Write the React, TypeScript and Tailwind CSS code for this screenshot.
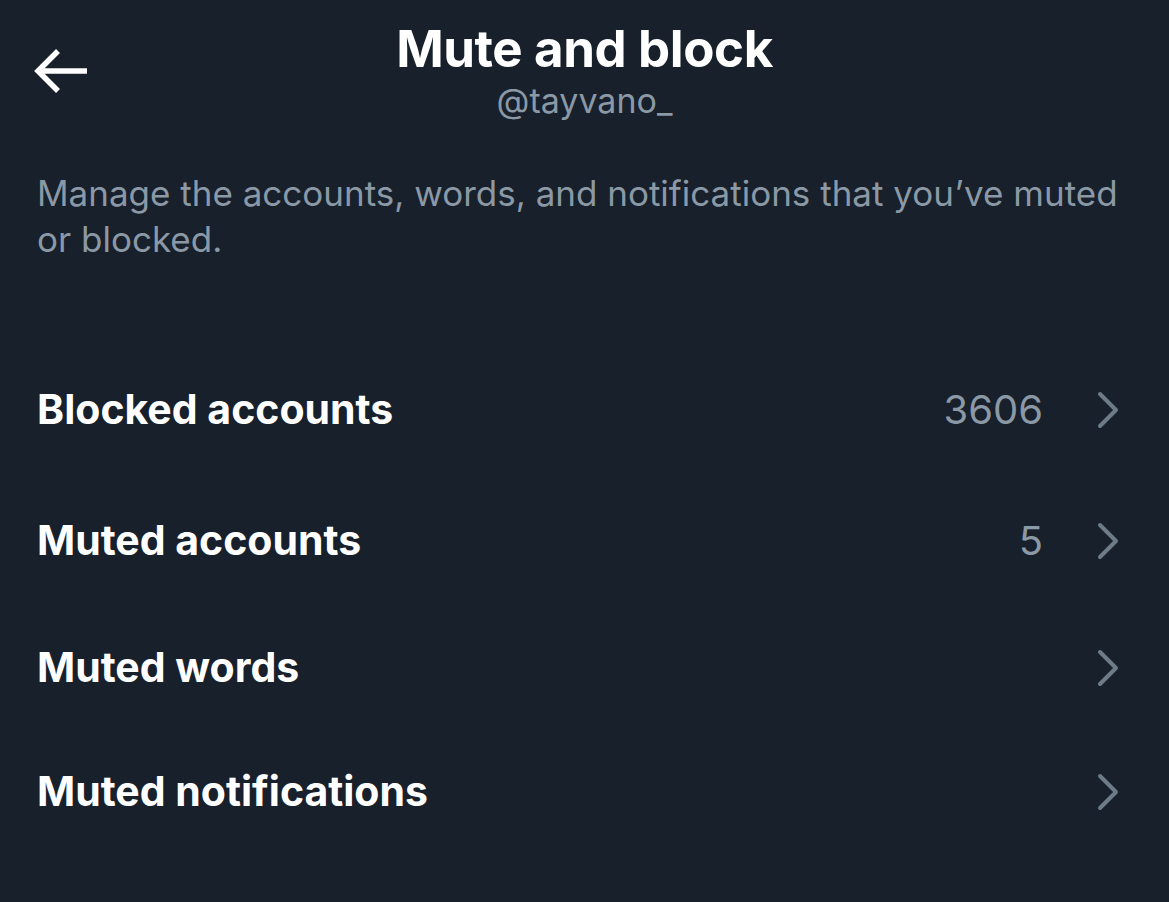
const rows = [
  { label: "Blocked accounts", count: "3606", h: "h-[132px]" },
  { label: "Muted accounts", count: "5", h: "h-[129px]" },
  { label: "Muted words", count: "", h: "h-[125px]" },
  { label: "Muted notifications", count: "", h: "h-[123px]" },
]

function Chevron() {
  return (
    <svg width="26" height="40" viewBox="0 0 26 40" fill="none" className="text-[#6e7b88]">
      <path d="M5 4 L21 20 L5 36" stroke="currentColor" strokeWidth="4" strokeLinecap="round" strokeLinejoin="round" />
    </svg>
  )
}

function BackArrow() {
  return (
    <svg width="58" height="48" viewBox="0 0 58 48" fill="none" className="text-white">
      <path d="M6 24 H55 M26 4 L6 24 L26 44" stroke="currentColor" strokeWidth="5.5" strokeLinecap="butt" strokeLinejoin="miter" />
    </svg>
  )
}

export default function App() {
  return (
    <div className="w-full h-[902px] bg-[#17202b] text-white overflow-hidden" style={{ fontFamily: "Inter, 'Liberation Sans', sans-serif" }}>
      {/* Header */}
      <div className="grid grid-cols-[1fr_auto_1fr] items-start pt-[18px]">
        <div className="pl-[32px] pt-[29px]">
          <BackArrow />
        </div>
        <div className="flex flex-col items-center">
          <h1 className="text-[51px] font-bold leading-[62px] tracking-[-0.4px]">Mute and block</h1>
          <div className="text-[34px] leading-[42px] text-[#8b98a5]">@tayvano_</div>
        </div>
        <div />
      </div>

      {/* Description */}
      <p className="px-[37px] mt-[48px] text-[35px] leading-[46px] text-[#8b98a5]">
        Manage the accounts, words, and notifications that you’ve muted or blocked.
      </p>

      {/* Rows */}
      <div className="mt-[82px] flex flex-col">
        {rows.map((r) => (
          <div key={r.label} className={`flex items-center pl-[37px] pr-[48px] ${r.h}`}>
            <span className="flex-1 text-[41px] font-bold">{r.label}</span>
            {r.count && <span className="text-[40px] text-[#8b98a5] mr-[52px]">{r.count}</span>}
            <Chevron />
          </div>
        ))}
      </div>
    </div>
  )
}
